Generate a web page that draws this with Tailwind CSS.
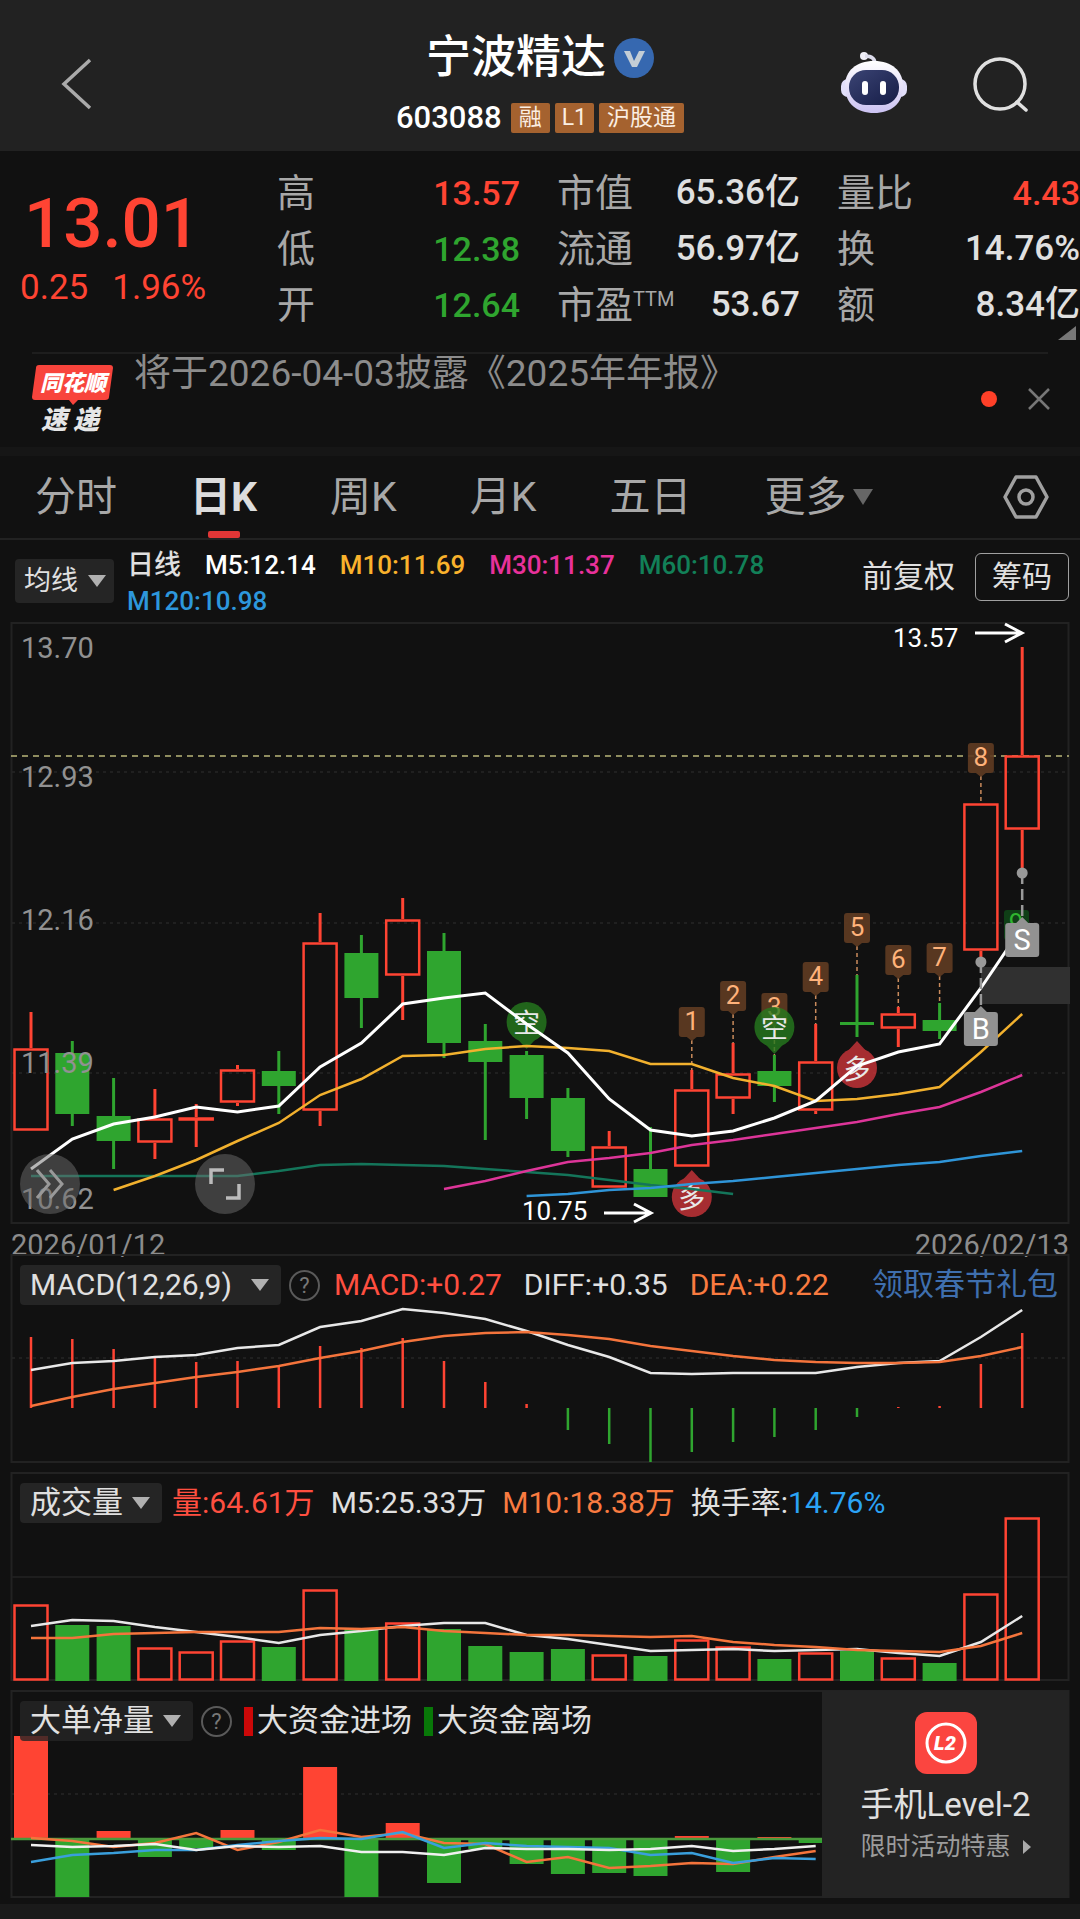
<!DOCTYPE html>
<html lang="zh-CN">

<head>
    <meta charset="utf-8">
    <meta name="viewport" content="width=device-width, initial-scale=1">
    <title>宁波精达 603088</title>
    <script src="https://cdn.jsdelivr.net/npm/@tailwindcss/browser@4"></script>
</head>

<body class="bg-[#111111] text-[#e0e0e0] min-h-screen flex flex-col font-[Roboto,'Noto_Sans_CJK_SC',sans-serif]">
    <!-- Шапка -->
    <header class="grid grid-cols-[1fr_auto_1fr] items-center bg-[#222222] pt-8 pb-[15px]">
        <button aria-label="返回" class="ml-[60px] w-8">
            <svg viewBox="0 0 32 52" class="w-8 h-[52px]" fill="none" stroke="#aaaaaa" stroke-width="3.5"><path d="M30 2L4 26l26 24"/></svg>
        </button>
        <div class="flex flex-col items-center gap-4">
            <h1 class="flex items-center gap-2 text-[45px] leading-[52px] font-medium text-white">宁波精达
                <svg viewBox="0 0 40 40" class="size-10"><circle cx="20" cy="20" r="20" fill="#3668b0"/><path d="M10 13h6l4 10 5-10h6l-8 16h-5z" fill="#c3cdd6"/></svg>
            </h1>
            <div class="flex items-center gap-[5px] text-[23px] leading-[30px] text-[#fbeee2]">
                <span class="text-[31px] leading-9 font-medium text-white mr-1">603088</span>
                <span class="bg-[#a5622f] rounded-xs px-2">融</span>
                <span class="bg-[#a5622f] rounded-xs px-[7px]">L1</span>
                <span class="bg-[#a5622f] rounded-xs px-2">沪股通</span>
            </div>
        </div>
        <div class="flex items-center justify-end gap-[65px] pr-[50px]">
            <button aria-label="智能助手">
                <svg viewBox="0 0 68 64" class="w-[68px] h-16">
                    <defs>
                        <linearGradient id="shell" x1="0" y1="0" x2="0" y2="1"><stop offset="0" stop-color="#ffffff"/><stop offset="1" stop-color="#cbc2f2"/></linearGradient>
                        <linearGradient id="visor" x1="0" y1="0" x2="1" y2="1"><stop offset="0" stop-color="#3b4474"/><stop offset="1" stop-color="#151c46"/></linearGradient>
                    </defs>
                    <circle cx="24" cy="4" r="4" fill="#f0eff8"/>
                    <path d="M25 4q10 0 10 8" fill="none" stroke="#dddcec" stroke-width="3.5"/>
                    <rect x="1" y="27" width="66" height="18" rx="7" fill="#e2dffa"/>
                    <path d="M34 9C16 9 5 19 5 34c0 18 12 27 29 27s29-9 29-27C63 19 52 9 34 9z" fill="url(#shell)"/>
                    <rect x="9" y="18" width="50" height="35" rx="17" fill="url(#visor)"/>
                    <rect x="22" y="29" width="6" height="14" rx="3" fill="#fff"/>
                    <rect x="40" y="29" width="6" height="14" rx="3" fill="#fff"/>
                </svg>
            </button>
            <button aria-label="搜索">
                <svg viewBox="0 0 57 57" class="size-[57px]" fill="none" stroke="#e0e0e0" stroke-width="3.5"><circle cx="27" cy="28" r="25"/><path d="M44 46l9 8" stroke-linecap="round"/></svg>
            </button>
        </div>
    </header>

    <!-- Котировки -->
    <section class="relative flex pt-[14px] pb-[19px]">
        <div class="w-[277px] shrink-0 pl-5 pt-[19px] text-[#ff4433]">
            <div class="pl-1 text-[69px] leading-[80px] font-medium">13.01</div>
            <div class="flex gap-6 pt-1 text-[35px] leading-10">
                <span>0.25</span><span>1.96%</span>
            </div>
        </div>
        <div class="flex-1 flex gap-[37px] text-[38px] leading-[56px]">
            <dl class="flex-1 grid grid-cols-[auto_1fr]">
                <dt class="text-[#a8a8a8]">高</dt><dd class="text-right text-[34px] font-medium text-[#ff4433]">13.57</dd>
                <dt class="text-[#a8a8a8]">低</dt><dd class="text-right text-[34px] font-medium text-[#2fa52f]">12.38</dd>
                <dt class="text-[#a8a8a8]">开</dt><dd class="text-right text-[34px] font-medium text-[#2fa52f]">12.64</dd>
            </dl>
            <dl class="flex-1 grid grid-cols-[auto_1fr]">
                <dt class="text-[#a8a8a8]">市值</dt><dd class="text-right text-[35px] font-medium">65.36亿</dd>
                <dt class="text-[#a8a8a8]">流通</dt><dd class="text-right text-[35px] font-medium">56.97亿</dd>
                <dt class="flex text-[#a8a8a8]">市盈<span class="text-[20px] leading-[44px]">TTM</span></dt><dd class="text-right text-[35px] font-medium">53.67</dd>
            </dl>
            <dl class="flex-1 grid grid-cols-[auto_1fr]">
                <dt class="text-[#a8a8a8]">量比</dt><dd class="text-right text-[34px] font-medium text-[#ff4433]">4.43</dd>
                <dt class="text-[#a8a8a8]">换</dt><dd class="text-right text-[35px] font-medium">14.76%</dd>
                <dt class="text-[#a8a8a8]">额</dt><dd class="text-right text-[35px] font-medium">8.34亿</dd>
            </dl>
        </div>
        <svg viewBox="0 0 18 14" class="absolute right-1 bottom-3 w-[18px] h-3.5"><path d="M18 0v14H0z" fill="#777"/></svg>
    </section>

    <!-- Новости -->
    <section class="mx-8 flex border-t-2 border-[#1e1e1e] h-[95px]">
        <svg viewBox="0 0 82 70" class="w-[82px] h-[70px] mt-[11px] font-black italic">
            <path d="M7 0h71q3 0 3 3l-4 29q0 3-4 3H46l-5 5-4-5H3q-3 0-3-3L4 3q0-3 3-3z" fill="#f8443c"/>
            <text x="8" y="26" font-size="22" fill="#fff">同花顺</text>
            <text x="9" y="64" font-size="26" fill="#e6e6e6">速</text>
            <text x="41" y="64" font-size="26" fill="#e6e6e6">递</text>
        </svg>
        <a href="#" class="ml-5 flex-1 text-[37px] leading-10 text-[#8c8c8c]">将于2026-04-03披露《2025年年报》</a>
        <span class="mt-[37px] size-4 rounded-full bg-[#ff4028]"></span>
        <button aria-label="关闭" class="self-start mt-8 ml-[29px] -mr-1">
            <svg viewBox="0 0 26 26" class="size-[26px]" stroke="#777" stroke-width="2.5"><path d="M3 3l20 20M23 3L3 23"/></svg>
        </button>
    </section>
    <div class="h-[9px] bg-[#161616]"></div>

    <!-- Вкладки периода -->
    <nav class="flex items-center gap-[73px] h-[84px] px-[35px] border-b-2 border-[#222222] text-[41px] leading-[56px] text-[#a8a8a8]">
        <button>分时</button>
        <button class="relative font-bold text-[#dcdcdc]">日K<span class="absolute left-1/2 -translate-x-1/2 -bottom-[13px] w-8 h-[7px] rounded-xs bg-[#e03636]"></span></button>
        <button>周K</button>
        <button>月K</button>
        <button>五日</button>
        <label class="flex items-center">
            <select aria-label="更多周期" class="appearance-none bg-transparent w-[88px]"><option>更多</option></select>
            <svg viewBox="0 0 20 16" class="w-5 h-4"><path d="M0 0h20L10 16z" fill="#666"/></svg>
        </label>
        <button aria-label="设置" class="ml-auto -mr-1">
            <svg viewBox="0 0 46 44" class="w-[46px] h-11" fill="none" stroke="#a0a0a0" stroke-width="3.5" stroke-linejoin="round"><path d="M13 2h20l11 20-11 20H13L2 22z"/><circle cx="23" cy="22" r="7"/></svg>
        </button>
    </nav>

    <!-- Средние линии -->
    <section class="flex items-center h-[82px] pl-[15px] pr-[11px]">
        <label class="flex items-center h-11 rounded bg-[#252525] pl-[9px] pr-2">
            <select aria-label="指标" class="appearance-none w-[64px] text-[27px] leading-9"><option>均线</option></select>
            <svg viewBox="0 0 18 12" class="w-[18px] h-3"><path d="M0 0h18L9 12z" fill="#b0b0b0"/></svg>
        </label>
        <div class="flex-1 flex flex-wrap gap-x-6 ml-[13px] pt-1 text-[26px] leading-9 font-medium">
            <span class="text-[27px]">日线</span>
            <span class="text-white">M5:12.14</span>
            <span class="text-[#f9b22c]">M10:11.69</span>
            <span class="text-[#e8319b]">M30:11.37</span>
            <span class="text-[#128058]">M60:10.78</span>
            <span class="text-[#2d97dc]">M120:10.98</span>
        </div>
        <button class="mb-2 text-[31px] leading-9">前复权</button>
        <button class="ml-5 mb-2 h-12 px-4 rounded-md border border-[#a0a0a0] text-[30px] leading-9">筹码</button>
    </section>

    <!-- Свечной график -->
    <section class="relative">
        <svg id="kline" viewBox="0 622 1080 607" class="block w-full"></svg>
        <button aria-label="展开" class="absolute left-[20px] bottom-[15px] size-[60px] rounded-full bg-[#6e6e6e]/50 flex items-center justify-center">
            <svg viewBox="0 0 28 30" class="w-7 h-[30px]" fill="none" stroke="#999" stroke-width="3"><path d="M1 1l12 14L1 29M14 1l12 14-12 14"/></svg>
        </button>
        <button aria-label="全屏" class="absolute left-[195px] bottom-[15px] size-[60px] rounded-full bg-[#6e6e6e]/50 flex items-center justify-center">
            <svg viewBox="0 0 32 32" class="size-8" fill="none" stroke="#bbb" stroke-width="3.5"><path d="M2 16V2h13M30 16v14H17"/></svg>
        </button>
    </section>
    <div class="flex justify-between px-[11px] pt-2 text-[29px] leading-[17px] text-[#8c8c8c]">
        <time>2026/01/12</time><time>2026/02/13</time>
    </div>

    <!-- MACD -->
    <section class="grid">
        <svg id="macd" viewBox="0 1254 1080 210" class="col-start-1 row-start-1 w-full"></svg>
        <div class="col-start-1 row-start-1 self-start flex items-center pl-5 pr-[22px] pt-[11px] text-[30px] leading-10">
            <label class="flex items-center rounded bg-[#252525] pl-[10px] pr-3">
                <select aria-label="MACD 参数" class="appearance-none w-[221px]"><option>MACD(12,26,9)</option></select>
                <svg viewBox="0 0 18 12" class="w-[18px] h-3"><path d="M0 0h18L9 12z" fill="#b0b0b0"/></svg>
            </label>
            <button aria-label="说明" class="ml-2 size-[31px] rounded-full border-2 border-[#5a5a5a] text-[22px] leading-[27px] text-[#777]">?</button>
            <span class="ml-[14px] text-[#ff4f40]">MACD:+0.27</span>
            <span class="ml-[22px]">DIFF:+0.35</span>
            <span class="ml-[22px] text-[#f97b40]">DEA:+0.22</span>
            <a href="#" class="ml-auto text-[31px] text-[#3f6fae]">领取春节礼包</a>
        </div>
    </section>

    <!-- Объём -->
    <section class="grid mt-2">
        <svg id="volume" viewBox="0 1472 1080 210" class="col-start-1 row-start-1 w-full"></svg>
        <div class="col-start-1 row-start-1 self-start flex items-center pl-5 pt-[11px] text-[30px] leading-10">
            <label class="flex items-center rounded bg-[#252525] pl-[10px] pr-3">
                <select aria-label="成交量" class="appearance-none w-[102px] text-[31px]"><option>成交量</option></select>
                <svg viewBox="0 0 18 12" class="w-[18px] h-3"><path d="M0 0h18L9 12z" fill="#b0b0b0"/></svg>
            </label>
            <span class="ml-[10px] text-[#ff4f40]">量:64.61万</span>
            <span class="ml-4">M5:25.33万</span>
            <span class="ml-4 text-[#f97b40]">M10:18.38万</span>
            <span class="ml-4">换手率:<span class="text-[#2ba3f5]">14.76%</span></span>
        </div>
    </section>

    <!-- Крупные заявки -->
    <section class="grid mt-2">
        <svg id="orders" viewBox="0 1690 1080 208" class="col-start-1 row-start-1 w-full"></svg>
        <div class="col-start-1 row-start-1 self-start flex items-center pl-5 pt-[11px] text-[31px] leading-10">
            <label class="flex items-center rounded bg-[#252525]/80 pl-[10px] pr-3">
                <select aria-label="大单净量" class="appearance-none w-[133px]"><option>大单净量</option></select>
                <svg viewBox="0 0 18 12" class="w-[18px] h-3"><path d="M0 0h18L9 12z" fill="#b0b0b0"/></svg>
            </label>
            <button aria-label="说明" class="ml-2 size-[31px] rounded-full border-2 border-[#5a5a5a] text-[22px] leading-[27px] text-[#777]">?</button>
            <span class="ml-3 mr-1 w-[9px] h-[29px] bg-[#cc0808]"></span><span>大资金进场</span>
            <span class="ml-3 mr-1 w-[9px] h-[29px] bg-[#087808]"></span><span>大资金离场</span>
        </div>
        <a href="#" class="col-start-1 row-start-1 justify-self-end w-[247px] mr-[11px] mt-px flex flex-col items-center pt-[21px] bg-[#232323]">
            <svg viewBox="0 0 62 62" class="size-[62px]">
                <rect width="62" height="62" rx="12" fill="#fb4540"/>
                <circle cx="31" cy="31" r="19" fill="none" stroke="#fff" stroke-width="3"/>
                <text x="30" y="38" font-size="20" text-anchor="middle" fill="#fff" class="font-black italic">L2</text>
            </svg>
            <span class="mt-[11px] text-[33px] leading-10">手机Level-2</span>
            <span class="mt-1 flex items-center gap-3 text-[25px] leading-9 text-[#9c9c9c]">限时活动特惠
                <svg viewBox="0 0 8 14" class="w-2 h-3.5"><path d="M0 0l8 7-8 7z" fill="#aaa"/></svg>
            </span>
        </a>
    </section>
    <div class="mt-[6px] flex-1 bg-[#1a1a1a]"></div>

    <script>
        const RED = '#ff4433';
        const GREEN = '#2fa52f';
        const cx = i => +(31 + 41.3 * i).toFixed(1);

        const line = (x1, y1, x2, y2, color, w = 3, extra = '') =>
            `<line x1="${x1}" y1="${y1}" x2="${x2}" y2="${y2}" stroke="${color}" stroke-width="${w}" ${extra}/>`;
        const text = (x, y, s, size, color, extra = '') =>
            `<text x="${x}" y="${y}" font-size="${size}" fill="${color}" ${extra}>${s}</text>`;
        const poly = (ys, color, start = 0, w = 2.5) =>
            `<polyline fill="none" stroke="${color}" stroke-width="${w}" points="${ys.map((y, i) => cx(i + start) + ',' + y).join(' ')}"/>`;
        const frame = (top, bottom) =>
            `<rect x="11.5" y="${top}" width="1057" height="${bottom - top}" fill="none" stroke="#222222" stroke-width="2"/>`;
        const grid = y => line(12, y, 1068, y, '#262626', 1.5, 'stroke-dasharray="3 4"');

        // Столбик: красный - контур, зелёный - заливка
        function box(i, top, bottom, color) {
            if (color === RED) {
                return `<rect x="${cx(i) - 16.5}" y="${top + 1.5}" width="33" height="${Math.max(bottom - top - 3, 1)}" fill="none" stroke="${RED}" stroke-width="2.5"/>`;
            }
            return `<rect x="${cx(i) - 17}" y="${top}" width="34" height="${bottom - top}" fill="${GREEN}"/>`;
        }

        // [max, верх тела, низ тела, min, цвет]
        const candles = [
            [1012, 1048, 1131, 1131, RED], [1041, 1053, 1114, 1126, GREEN], [1078, 1116, 1141, 1169, GREEN],
            [1089, 1118, 1143, 1159, RED], [1104, 1117, 1120, 1147, RED], [1065, 1069, 1103, 1106, RED],
            [1051, 1071, 1086, 1114, GREEN], [913, 942, 1111, 1126, RED], [935, 953, 998, 1028, GREEN],
            [898, 919, 976, 1020, RED], [933, 951, 1043, 1058, GREEN], [1024, 1041, 1062, 1140, GREEN],
            [1051, 1055, 1098, 1119, GREEN], [1088, 1098, 1151, 1157, GREEN], [1131, 1146, 1188, 1188, RED],
            [1127, 1169, 1197, 1197, GREEN], [1070, 1089, 1167, 1167, RED], [1043, 1073, 1099, 1114, RED],
            [1055, 1071, 1086, 1102, GREEN], [1024, 1061, 1111, 1114, RED], [975, 1022, 1025, 1037, GREEN],
            [1007, 1013, 1029, 1047, RED], [1003, 1020, 1031, 1039, GREEN], [803, 803, 951, 958, RED],
            [647, 755, 830, 868, RED]
        ];
        const ma5 = [1169, 1139, 1124, 1117, 1107, 1112, 1106, 1067, 1043, 1004, 998, 993, 1024, 1053, 1099, 1130, 1136, 1131, 1118, 1101, 1066, 1052, 1044, 988, 927];
        const ma10 = [1190, 1176, 1160, 1141, 1123, 1095, 1079, 1056, 1055, 1049, 1046, 1048, 1051, 1064, 1064, 1078, 1086, 1101, 1099, 1094, 1087, 1052, 1014];
        const ma30 = [1189, 1181, 1171, 1162, 1158, 1153, 1145, 1140, 1134, 1128, 1122, 1114, 1107, 1092, 1075];
        const ma60 = [1176, 1176, 1176, 1176, 1176, 1176, 1171, 1165, 1164, 1165, 1166, 1169, 1172, 1175, 1180, 1185, 1189, 1194];
        const ma120 = [1196, 1194, 1190, 1188, 1184, 1181, 1177, 1173, 1169, 1165, 1162, 1156, 1151];

        // Флажок с номером дня
        function flag(i, top, n) {
            const x = cx(i);
            return line(x, top + 33, x, candles[i][0], '#c98b5c', 1.5, 'stroke-dasharray="4 3"')
                + `<path d="M${x - 10} ${top}h20q3 0 3 3v24q0 3-3 3h-5l-5 4-5-4h-5q-3 0-3-3v-24q0-3 3-3z" fill="#5e3b22" fill-opacity=".92"/>`
                + text(x, top + 23, n, 26, '#ffb27a', 'text-anchor="middle"');
        }
        // Сигнал: dir = 1 остриё вниз, -1 вверх
        function signal(i, y, s, color, dir) {
            const x = cx(i);
            return `<g opacity=".8"><path d="M${x - 11} ${y + 15 * dir}L${x} ${y + 27 * dir}L${x + 11} ${y + 15 * dir}z" fill="${color}"/>`
                + `<circle cx="${x}" cy="${y}" r="20" fill="${color}"/></g>`
                + text(x, y + 11, s, 27, '#e8e8e8', 'text-anchor="middle"');
        }
        // Отметка сделки
        function trade(i, dot, top, s) {
            const x = cx(i);
            return line(x, dot, x, top, '#999', 2.5, 'stroke-dasharray="11 5"')
                + `<circle cx="${x}" cy="${dot}" r="5.5" fill="#999"/>`
                + `<path d="M${x - 14} ${top}h8l6-6 6 6h8q3 0 3 3v28q0 3-3 3h-28q-3 0-3-3v-28q0-3 3-3z" fill="#929292"/>`
                + text(x, top + 27, s, 29, '#fff', 'text-anchor="middle"');
        }
        const arrow = (x, y) => `<path d="M${x} ${y}h46m-16-9l17 9-17 9" fill="none" stroke="#fff" stroke-width="3"/>`;

        function drawKline() {
            let s = frame(623, 1223) + grid(772) + grid(923) + grid(1073);
            s += '<rect x="981" y="967" width="89" height="37" fill="#303030"/>';
            s += line(11, 756, 1069, 756, '#b9b67a', 1.5, 'stroke-dasharray="6 5"');
            candles.forEach(([high, top, bottom, low, color], i) => {
                s += line(cx(i), high, cx(i), top, color) + line(cx(i), bottom, cx(i), low, color) + box(i, top, bottom, color);
            });
            [[658, '13.70'], [787, '12.93'], [930, '12.16'], [1073, '11.39'], [1209, '10.62']].forEach(([y, v]) => {
                s += text(21, y, v, 29, '#919191');
            });
            [[16, 1007, 1], [17, 981, 2], [18, 993, 3], [19, 962, 4], [20, 913, 5], [21, 945, 6], [22, 943, 7], [23, 743, 8]].forEach(f => s += flag(...f));
            s += signal(12, 1022, '空', '#267a1e', 1) + signal(18, 1027, '空', '#267a1e', 1);
            s += '<rect x="1004" y="910" width="25" height="30" rx="3" fill="#0f3f16"/>' + text(1016, 932, 9, 26, '#2fb52f', 'text-anchor="middle"');
            s += signal(16, 1197, '多', '#cc343a', -1) + signal(20, 1068, '多', '#cc343a', -1);
            s += poly(ma60, '#14755a') + poly(ma120, '#2f95d8', 12) + poly(ma30, '#dd3599', 10) + poly(ma10, '#f2b12e', 2) + poly(ma5, '#ffffff', 0, 3);
            s += trade(24, 873, 923, 'S') + trade(23, 962, 1012, 'B');
            s += text(893, 647, '13.57', 26, '#fff') + arrow(975, 633) + text(522, 1220, '10.75', 26, '#fff') + arrow(604, 1213);
            document.getElementById('kline').innerHTML = s;
        }

        function drawMacd() {
            const bars = [1337, 1339, 1349, 1358, 1362, 1361, 1367, 1346, 1348, 1338, 1361, 1382, 1404, 1430, 1444, 1462, 1452, 1442, 1437, 1430, 1417, 1407, 1406, 1364, 1333];
            const diff = [1370, 1363, 1361, 1357, 1355, 1348, 1345, 1327, 1321, 1309, 1313, 1319, 1331, 1345, 1357, 1373, 1374, 1373, 1373, 1373, 1367, 1363, 1361, 1337, 1310];
            const dea = [1406, 1397, 1389, 1383, 1377, 1372, 1366, 1358, 1351, 1342, 1336, 1333, 1332, 1335, 1339, 1346, 1351, 1356, 1360, 1362, 1363, 1363, 1362, 1356, 1347];
            let s = frame(1255, 1462) + grid(1358);
            bars.forEach((y, i) => s += line(cx(i), 1408, cx(i), y, y > 1408 ? GREEN : RED, 2.5));
            s += poly(diff, '#e8e8e8') + poly(dea, '#f4743c');
            document.getElementById('macd').innerHTML = s;
        }

        function drawVolume() {
            const bars = [1604, 1625, 1626, 1647, 1651, 1640, 1647, 1589, 1629, 1622, 1629, 1646, 1652, 1649, 1654, 1656, 1639, 1646, 1659, 1652, 1651, 1657, 1663, 1593, 1517];
            const m5 = [1626, 1620, 1621, 1627, 1632, 1637, 1643, 1635, 1631, 1626, 1623, 1623, 1635, 1639, 1645, 1651, 1650, 1649, 1651, 1650, 1649, 1653, 1656, 1642, 1616];
            const m10 = [1638, 1638, 1634, 1633, 1632, 1632, 1632, 1628, 1629, 1627, 1631, 1633, 1635, 1635, 1636, 1637, 1636, 1642, 1645, 1647, 1650, 1651, 1652, 1646, 1633];
            let s = frame(1473, 1680) + line(12, 1577, 1068, 1577, '#1e1e1e', 2);
            bars.forEach((y, i) => s += box(i, y, 1681, candles[i][4]));
            s += poly(m5, '#e8e8e8') + poly(m10, '#f4743c');
            document.getElementById('volume').innerHTML = s;
        }

        function drawOrders() {
            const bars = [1736, 1897, 1831, 1857, 1848, 1830, 1850, 1767, 1897, 1823, 1883, 1849, 1864, 1874, 1873, 1876, 1836, 1872, 1837, 1843];
            const a = [1838, 1841, 1847, 1843, 1833, 1850, 1842, 1830, 1837, 1833, 1843, 1844, 1862, 1857, 1868, 1866, 1863, 1864, 1857, 1851];
            const b = [1845, 1847, 1846, 1844, 1850, 1846, 1847, 1846, 1852, 1852, 1855, 1848, 1849, 1849, 1850, 1849, 1846, 1851, 1849, 1846];
            const c = [1862, 1855, 1853, 1850, 1850, 1845, 1841, 1838, 1839, 1832, 1848, 1843, 1846, 1847, 1848, 1855, 1853, 1863, 1858, 1859];
            let s = frame(1691, 1897) + grid(1794);
            bars.forEach((y, i) => {
                s += `<rect x="${cx(i) - 17}" y="${Math.min(y, 1839)}" width="34" height="${Math.abs(y - 1839)}" fill="${y > 1839 ? GREEN : RED}"/>`;
            });
            s += line(11, 1839, 822, 1839, '#4a9a3c', 2.5) + poly(a, '#f4743c') + poly(c, '#3a9fdc') + poly(b, '#f0f0f0');
            document.getElementById('orders').innerHTML = s;
        }

        drawKline();
        drawMacd();
        drawVolume();
        drawOrders();
    </script>
</body>

</html>
